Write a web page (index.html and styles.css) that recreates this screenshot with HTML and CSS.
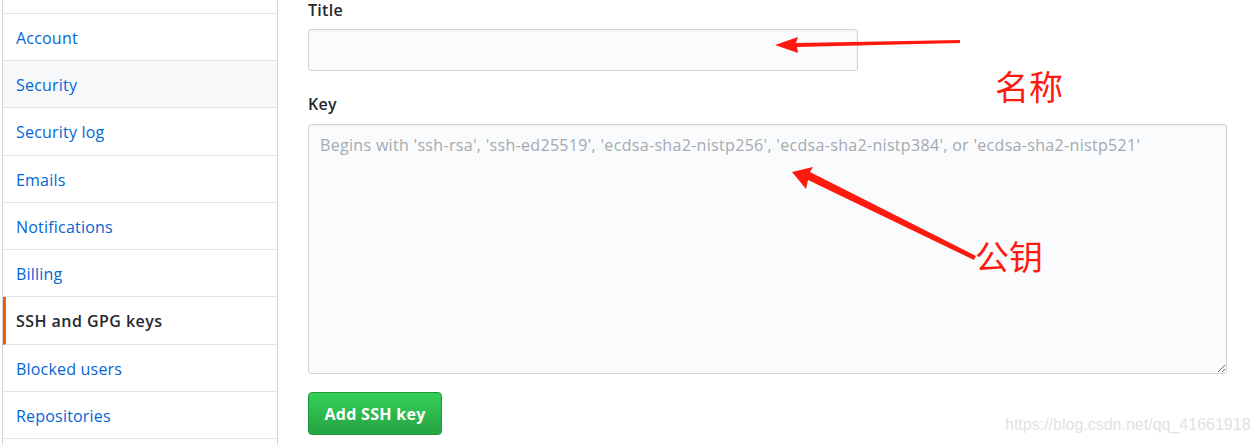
FILE: index.html
```html
<!DOCTYPE html>
<html>
<head>
<meta charset="utf-8">
<link rel="stylesheet" href="styles.css">
</head>
<body>
<div class="page">
  <nav class="menu">
    <div class="menu-item stub"></div>
    <a class="menu-item">Account</a>
    <a class="menu-item hover">Security</a>
    <a class="menu-item">Security log</a>
    <a class="menu-item">Emails</a>
    <a class="menu-item">Notifications</a>
    <a class="menu-item">Billing</a>
    <a class="menu-item selected">SSH and GPG keys</a>
    <a class="menu-item">Blocked users</a>
    <a class="menu-item">Repositories</a>
    <a class="menu-item"></a>
  </nav>
  <main class="content">
    <label class="label">Title</label>
    <input class="input title" type="text">
    <label class="label key-label">Key</label>
    <textarea class="input key" placeholder="Begins with 'ssh-rsa', 'ssh-ed25519', 'ecdsa-sha2-nistp256', 'ecdsa-sha2-nistp384', or 'ecdsa-sha2-nistp521'"></textarea>
    <button class="btn">Add SSH key</button>
  </main>
</div>
<svg class="arrows" width="1258" height="445" viewBox="0 0 1258 445">
  <polygon points="960,40 796,43 798,37 775,45 798,53 797,47 960,43" fill="#ff1a0f"/>
  <polygon points="976,256 810,172 813,167 792,172 806,189 808,180 974,260" fill="#ff1a0f"/>
</svg>
<div class="note n1">名称</div>
<div class="note n2">公钥</div>
<div class="watermark">https://blog.csdn.net/qq_41661918</div>
</body>
</html>
```
FILE: styles.css
```css
html, body {
  margin: 0;
  padding: 0;
  background: #fff;
  width: 1258px;
  height: 445px;
  overflow: hidden;
}
body {
  position: relative;
  font-family: "Open Sans", "Noto Sans", sans-serif;
}
.page {
  display: flex;
  align-items: flex-start;
  padding-left: 2px;
  gap: 30px;
  height: 445px;
  overflow: hidden;
}
.menu {
  width: 276px;
  box-sizing: border-box;
  border-left: 1px solid #d1d5da;
  border-right: 1px solid #d1d5da;
  display: flex;
  flex-direction: column;
  flex-shrink: 0;
}
.menu-item {
  display: block;
  flex-shrink: 0;
  height: 47.22px;
  line-height: 48px;
  padding-left: 13px;
  border-bottom: 1px solid #e1e4e8;
  color: #0366d6;
  font-size: 16px;
  letter-spacing: 0.2px;
  box-sizing: border-box;
}
.menu-item.stub {
  height: 14px;
}
.menu-item.hover {
  background: #f6f8fa;
}
.menu-item.selected {
  color: #24292e;
  border-left: 3px solid #e36209;
  padding-left: 10px;
  font-weight: 600;
  letter-spacing: 0.45px;
}
.content {
  display: flex;
  flex-direction: column;
  align-items: flex-start;
  width: 918px;
  padding-top: 1px;
}
.label {
  font-size: 16px;
  font-weight: 600;
  color: #24292e;
  line-height: 18px;
  margin-bottom: 10px;
  letter-spacing: 0.3px;
}
.key-label {
  margin-top: 24px;
  margin-bottom: 11px;
}
.input {
  box-sizing: border-box;
  background: #fafbfc;
  border: 1px solid #d1d5da;
  border-radius: 3px;
  box-shadow: inset 0 1px 2px rgba(27,31,35,0.05);
  font-family: inherit;
  margin: 0;
}
.title {
  width: 550px;
  height: 42px;
}
.key {
  width: 919px;
  height: 250px;
  padding: 8px 11px;
  font-size: 16px;
  line-height: 24px;
  letter-spacing: 0.32px;
}
.key::placeholder {
  color: #a3aab1;
}
.btn {
  margin-top: 18px;
  width: 134px;
  height: 43px;
  border: 1px solid #229438;
  border-radius: 4px;
  background: linear-gradient(#34d058, #28a745 90%);
  color: #fff;
  font-family: inherit;
  font-size: 16px;
  font-weight: 700;
  letter-spacing: 0.3px;
}
.arrows {
  position: absolute;
  left: 0;
  top: 0;
  pointer-events: none;
}
.note {
  position: absolute;
  color: #ff1a0f;
  font-family: "Noto Sans CJK SC", sans-serif;
  font-size: 34px;
  line-height: 34px;
}
.n1 { left: 995px; top: 69px; }
.n2 { left: 975px; top: 239px; }
.watermark {
  position: absolute;
  left: 1005px;
  top: 416px;
  font-family: "Liberation Sans", Arial, sans-serif;
  font-size: 16px;
  color: #e2e2e2;
}
```
